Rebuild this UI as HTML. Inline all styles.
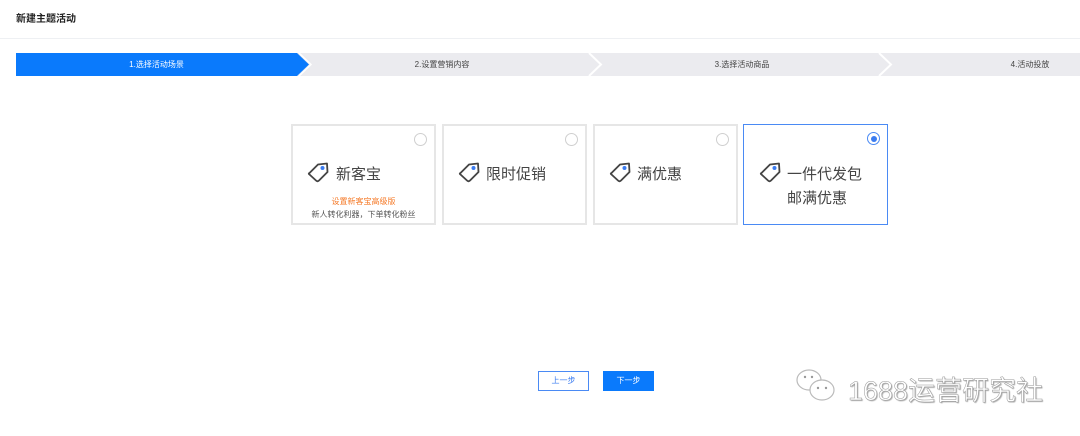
<!DOCTYPE html>
<html><head><meta charset="utf-8"><style>
*{margin:0;padding:0;box-sizing:border-box}
body{width:1080px;height:436px;background:#fff;font-family:"Liberation Sans","Noto Sans CJK SC",sans-serif;position:relative;overflow:hidden;color:#333}
.abs{position:absolute}
.title{left:16px;top:10px;font-size:10px;color:#222;font-weight:bold}
.sep{left:0;top:38px;width:1080px;height:1px;background:#eef0f3}
.lbl{top:53px;height:23px;line-height:23px;font-size:8px;text-align:center;color:#444}
.card{top:124px;width:145px;height:101px;border:2px solid #e6e6e6;background:#fff}
.card.sel{border:1.5px solid #4a8af4}
.radio{position:absolute;right:7px;top:7px;width:13px;height:13px;border:1px solid #cfcfcf;border-radius:50%}
.sel .radio{border-color:#4a8af4}
.sel .radio:after{content:"";position:absolute;left:2.5px;top:2.5px;width:6px;height:6px;border-radius:50%;background:#3b7cf0}
.name{position:absolute;font-size:15px;color:#444}
.tag{position:absolute;width:24px;height:24px}
.btn{top:371px;width:51px;height:20px;font-size:8px;text-align:center;line-height:18px}
</style></head><body>
<div class="abs title">新建主题活动</div>
<div class="abs sep"></div>
<svg class="abs" style="left:16px;top:53px" width="1064" height="23">
<rect x="0" y="0" width="1064" height="23" fill="#ebebef"/>
<polyline points="573,0 585,11.5 573,23" fill="none" stroke="#fff" stroke-width="2"/>
<polyline points="863,0 875,11.5 863,23" fill="none" stroke="#fff" stroke-width="2"/>
<polygon points="0,0 281,0 293,11.5 281,23 0,23" fill="#0a7afc"/>
<polyline points="283,0 295,11.5 283,23" fill="none" stroke="#fff" stroke-width="1.5"/>
</svg>
<div class="abs lbl" style="left:16px;width:281px;color:#fff">1.选择活动场景</div>
<div class="abs lbl" style="left:297px;width:290px">2.设置营销内容</div>
<div class="abs lbl" style="left:592px;width:300px">3.选择活动商品</div>
<div class="abs lbl" style="left:980px;width:100px">4.活动投放</div>

<svg width="0" height="0" style="position:absolute"><defs><g id="tg"><path d="M2.5 13 L11 4.5 L20 3.5 L20.5 12 L12 20.5 Q10.5 22 9 20.5 L2.5 14.5 Q1 13.5 2.5 13 Z" fill="none" stroke="#444" stroke-width="1.8" stroke-linejoin="round"/><circle cx="15.5" cy="8" r="2" fill="#3b7cf0"/></g></defs></svg>

<div class="abs card" style="left:291px"><div class="radio"></div>
<svg class="tag" style="left:14px;top:34px"><use href="#tg"/></svg>
<div class="name" style="left:43px;top:37px">新客宝</div>
<div style="position:absolute;left:0;width:141px;top:70px;text-align:center;font-size:8px;color:#f57a28">设置新客宝高级版</div>
<div style="position:absolute;left:0;width:141px;top:83px;text-align:center;font-size:8px;color:#555">新人转化利器，下单转化粉丝</div>
</div>
<div class="abs card" style="left:442px"><div class="radio"></div>
<svg class="tag" style="left:14px;top:34px"><use href="#tg"/></svg>
<div class="name" style="left:42px;top:37px">限时促销</div></div>
<div class="abs card" style="left:593px"><div class="radio"></div>
<svg class="tag" style="left:14px;top:34px"><use href="#tg"/></svg>
<div class="name" style="left:42px;top:37px">满优惠</div></div>
<div class="abs card sel" style="left:743px"><div class="radio"></div>
<svg class="tag" style="left:15px;top:35px"><use href="#tg"/></svg>
<div class="name" style="left:43px;top:38px">一件代发包</div>
<div class="name" style="left:43px;top:62px">邮满优惠</div></div>

<div class="abs btn" style="left:538px;border:1px solid #4a8af4;color:#3b7cf0;background:#fff">上一步</div>
<div class="abs btn" style="left:603px;background:#0a7afc;color:#fff;line-height:20px">下一步</div>

<svg class="abs" style="left:795px;top:368px" width="45" height="40">
<ellipse cx="14" cy="12" rx="12" ry="10" fill="#fff" stroke="#bbb" stroke-width="1.2"/>
<ellipse cx="27" cy="22" rx="12" ry="10" fill="#fff" stroke="#bbb" stroke-width="1.2"/>
<circle cx="10" cy="9" r="1.2" fill="#999"/><circle cx="17" cy="9" r="1.2" fill="#999"/>
<circle cx="23" cy="20" r="1.2" fill="#999"/><circle cx="31" cy="20" r="1.2" fill="#999"/>
</svg>
<div class="abs" style="left:848px;top:369px;font-size:27px;color:#fff;text-shadow:1px 1px 1px #aaa;-webkit-text-stroke:0.5px #999">1688运营研究社</div>
</body></html>
